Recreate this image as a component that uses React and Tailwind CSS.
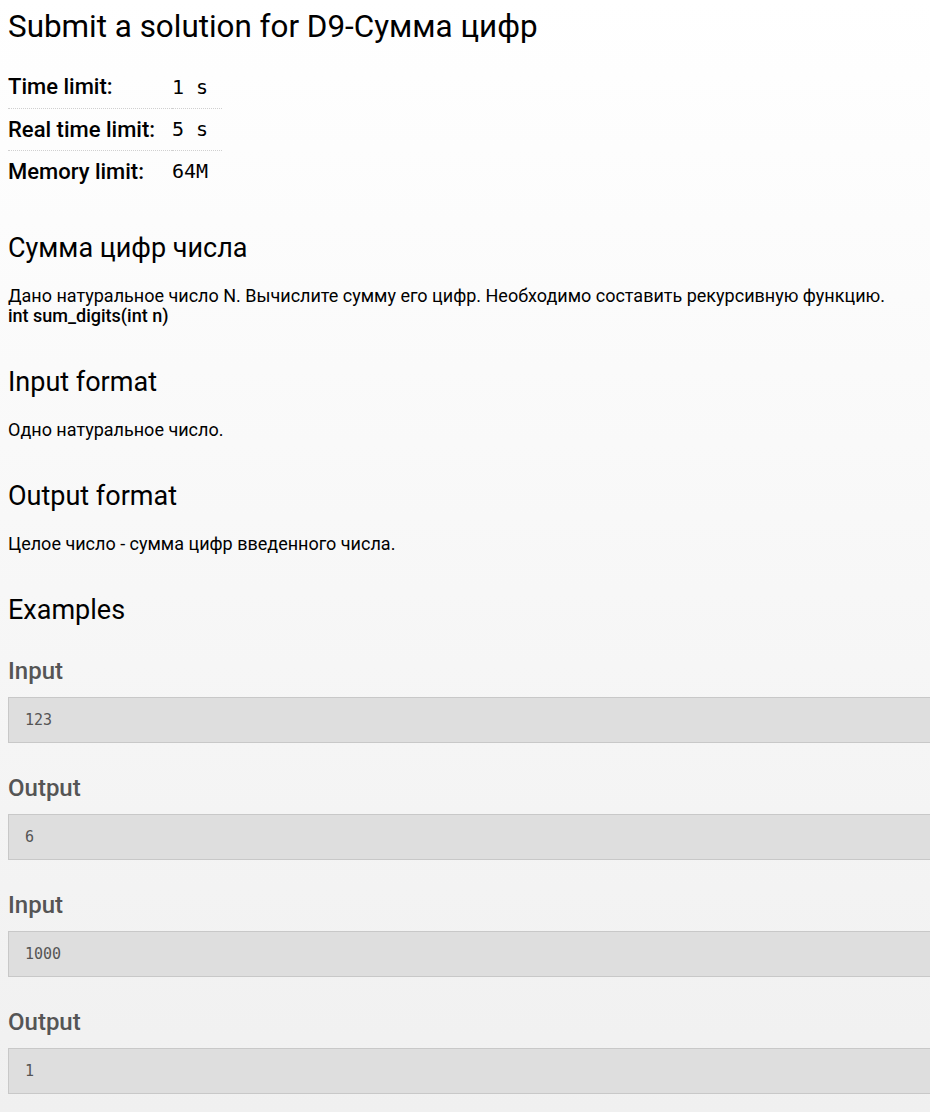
const limits = [
  { label: 'Time limit:', value: '1 s' },
  { label: 'Real time limit:', value: '5 s' },
  { label: 'Memory limit:', value: '64M' },
];

const examples = [
  { title: 'Input', text: '123' },
  { title: 'Output', text: '6' },
  { title: 'Input', text: '1000' },
  { title: 'Output', text: '1' },
];

const Section = ({ title, children }) => (
  <div className="mt-[42px]">
    <h2 className="text-[27px] leading-[28px] font-normal text-black">{title}</h2>
    <div className="mt-[24px]">{children}</div>
  </div>
);

export default function App() {
  return (
    <div
      className="min-h-[1112px] w-full overflow-hidden bg-gradient-to-b from-white to-[#f0f0f0] pl-2 pt-[9px] pb-4 text-black"
      style={{ fontFamily: 'Roboto, "Noto Sans", sans-serif' }}
    >
      <h1 className="text-[31.4px] leading-[36px] font-normal">Submit a solution for D9-Сумма цифр</h1>

      <table className="mt-[21px] w-[214px] border-collapse text-[22px] font-medium">
        <tbody>
          {limits.map((row, i) => (
            <tr
              key={row.label}
              className={i < limits.length - 1 ? 'h-[42px] border-b border-dotted border-[#d0d0d0]' : 'h-[42px]'}
            >
              <td className="w-[164px] p-0 align-middle whitespace-nowrap">{row.label}</td>
              <td
                className="p-0 text-[20px] font-normal align-middle whitespace-pre"
                style={{ fontFamily: '"DejaVu Sans Mono", monospace' }}
              >
                {row.value}
              </td>
            </tr>
          ))}
        </tbody>
      </table>

      <Section title="Сумма цифр числа">
        <p className="text-[18px] leading-[20px]">
          Дано натуральное число N. Вычислите сумму его цифр. Необходимо составить рекурсивную функцию.
          <br />
          <span className="font-medium">int sum_digits(int n)</span>
        </p>
      </Section>

      <Section title="Input format">
        <p className="text-[18px] leading-[20px]">Одно натуральное число.</p>
      </Section>

      <Section title="Output format">
        <p className="text-[18px] leading-[20px]">Целое число - сумма цифр введенного числа.</p>
      </Section>

      <div className="mt-[42px]">
        <h2 className="text-[27px] leading-[28px] font-normal">Examples</h2>
        {examples.map((ex, i) => (
          <div key={i} className={i === 0 ? 'mt-[33px]' : 'mt-[31px]'}>
            <h3 className="text-[24px] leading-[28px] font-medium text-[#555555]">{ex.title}</h3>
            <div
              className="mt-[12px] flex h-[46px] w-[1000px] items-center border border-[#c8c8c8] bg-[#dedede] pl-4 text-[15px] text-[#555555]"
              style={{ fontFamily: '"DejaVu Sans Mono", monospace' }}
            >
              {ex.text}
            </div>
          </div>
        ))}
      </div>
    </div>
  );
}
